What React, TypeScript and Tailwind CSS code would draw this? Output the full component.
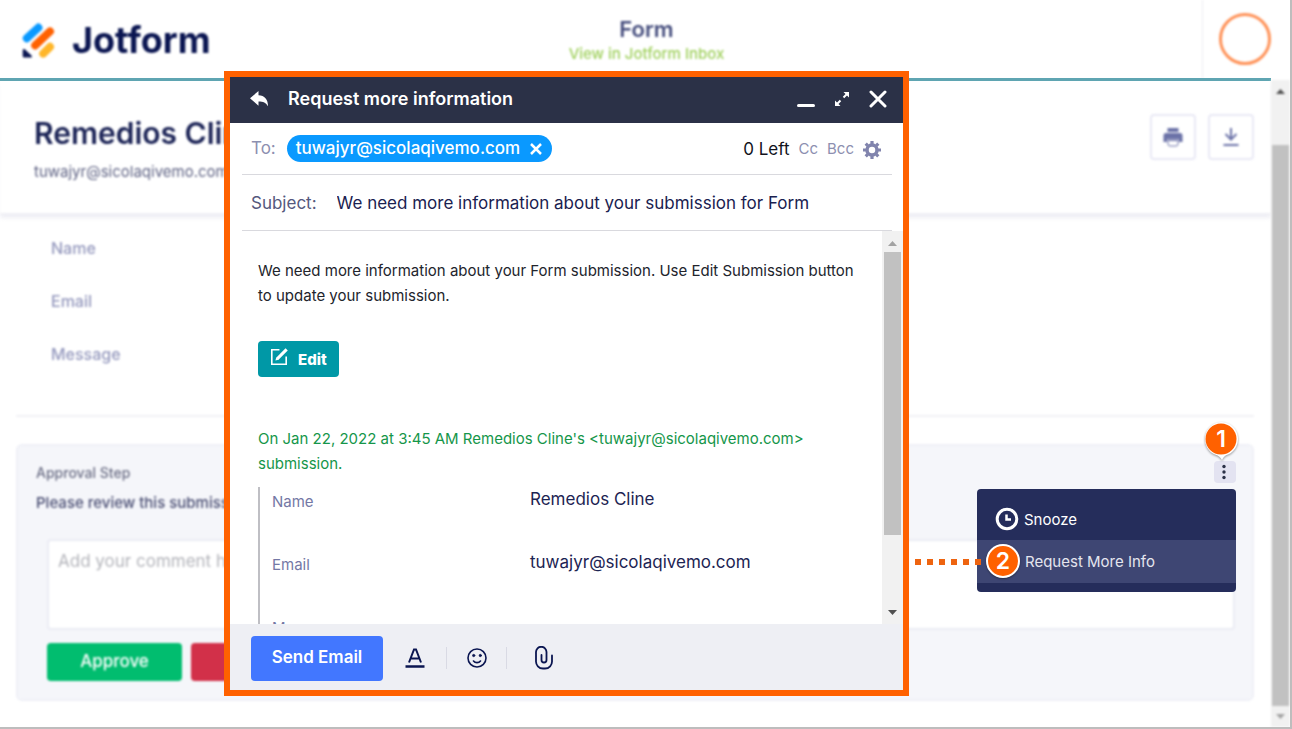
import React from "react";

const fields = ["Name", "Email", "Message"];

const submission = [
  { label: "Name", value: "Remedios Cline" },
  { label: "Email", value: "tuwajyr@sicolaqivemo.com" },
  { label: "Message", value: "" },
];

function Logo() {
  return (
    <svg viewBox="22 20 36 38" className="h-[38px] w-9" fill="none" strokeLinecap="round" aria-hidden="true">
      <path d="M26.8 37.2 38.4 26.6" stroke="#0a99ff" strokeWidth="8" />
      <path d="M35.2 44.4 50 30.4" stroke="#ff6100" strokeWidth="8" />
      <path d="M43.2 52.6 50 45.8" stroke="#ffb629" strokeWidth="8" />
      <path d="M22.7 49.4c0-1.3 1.4-1.9 2.3-1l6.500 6c.9.9.3 2.100-.9 2.100h-6.400c-.8 0-1.500-.6-1.500-1.500z" fill="#0a1551" />
    </svg>
  );
}

function Arrow({ down = false, className = "" }: { down?: boolean; className?: string }) {
  return (
    <svg viewBox="0 0 9 5" className={`h-[5px] w-[9px] ${className}`} fill="currentColor" aria-hidden="true">
      <path d={down ? "M0 0h9L4.500 5z" : "M0 5h9L4.500 0z"} />
    </svg>
  );
}

function PageHeader() {
  return (
    <header className="flex h-[78px] shrink-0 items-stretch blur-[0.8px]">
      <div className="flex flex-1 items-center gap-[14px] pt-[2px] pl-[22px]">
        <Logo />
        <span className="text-[36px] leading-10 font-bold text-[#0a1551]">Jotform</span>
      </div>
      <div className="flex flex-col items-center pt-[15px] pr-[19px]">
        <h1 className="text-[22px] leading-7 font-semibold text-[#454d7d]">Form</h1>
        <a href="#inbox" className="text-[15px] leading-[22px] font-medium text-[#9fd05c]">
          View in Jotform Inbox
        </a>
      </div>
      <div className="flex flex-1 justify-end">
        <div className="flex w-[88px] items-center border-l border-[#ececf2] pl-4">
          <button aria-label="Account" className="size-[52px] rounded-full border-[3px] border-[#ff9258]" />
        </div>
      </div>
    </header>
  );
}

function Summary() {
  return (
    <section className="flex h-[133px] items-start justify-between border-b border-[#eeeef4] pt-[33px] pr-[17px] pl-[34px] shadow-[0_4px_4px_#efeff5] blur-[0.8px]">
      <div>
        <h2 className="text-[30px] leading-[38px] font-semibold text-[#1b2356]">Remedios Cline</h2>
        <p className="mt-2 text-[15px] leading-6 text-[#5f6384]">tuwajyr@sicolaqivemo.com</p>
      </div>
      <div className="flex gap-3">
        <button aria-label="Print" className="flex size-[46px] items-center justify-center rounded border-2 border-[#e9e9f5]">
          <svg viewBox="0 0 20 20" className="size-5" fill="#6c73a8" aria-hidden="true">
            <path d="M4.500 1h11v4h-11zM3 6h14a2.500 2.500 0 0 1 2.500 2.500V15h-3.500v-2.500H4V15H.5V8.500A2.500 2.500 0 0 1 3 6z" />
            <path d="M5 13.500h10V17a2 2 0 0 1-2 2H7a2 2 0 0 1-2-2z" fill="#fff" stroke="#6c73a8" />
          </svg>
        </button>
        <button aria-label="Download" className="flex size-[46px] items-center justify-center rounded border-2 border-[#e9e9f5]">
          <svg viewBox="0 0 20 20" className="size-5" fill="none" stroke="#6c73a8" strokeWidth="2" aria-hidden="true">
            <path d="M10 1v11M4.500 7l5.500 5.500L15.500 7M2.500 18h15" />
          </svg>
        </button>
      </div>
    </section>
  );
}

function StepMenu() {
  return (
    <div className="absolute top-[17px] right-[18px] flex flex-col items-end">
      <button aria-label="More actions" className="flex size-[22px] items-center justify-center rounded bg-[#e3e3f1] pr-[2px]">
        <svg viewBox="0 0 4 16" className="h-4 w-1" fill="#2b3147" aria-hidden="true">
          <circle cx="2" cy="2.500" r="1.700" />
          <circle cx="2" cy="8" r="1.700" />
          <circle cx="2" cy="13.500" r="1.700" />
        </svg>
      </button>
      <div className="absolute right-[-3px] bottom-full flex h-10 w-9 justify-center">
        <svg viewBox="0 0 36 40" className="absolute inset-0 h-10 w-9 drop-shadow-[0_1px_1px_rgba(0,0,0,0.4)]" aria-hidden="true">
          <path d="M18 1a17 17 0 0 1 7 32.500c-3 1-4.500 2.500-6 5.500-1.500-3-4-4.500-7-5.500A17 17 0 0 1 18 1z" fill="#fff" />
          <circle cx="18" cy="18" r="15.500" fill="#ff6100" />
        </svg>
        <span className="relative text-[23px] leading-9 font-semibold text-white">1</span>
      </div>
      <ul className="mt-[6px] w-[259px] rounded bg-[#252d5b] pt-2 pb-[9px] text-[15px] text-white">
        <li>
          <button className="flex h-[43px] w-full items-center gap-[5px] pl-[18px]">
            <svg viewBox="0 0 24 24" className="size-6" fill="none" stroke="currentColor" strokeWidth="3" aria-hidden="true">
              <circle cx="12" cy="12" r="9.800" />
              <path d="M11.500 7.500v5h4.500" strokeWidth="2.500" />
            </svg>
            <span className="pt-[3px]">Snooze</span>
          </button>
        </li>
        <li className="relative">
          <button className="flex h-[43px] w-full items-center bg-[#3e4673] pt-[2px] pl-12 text-[#e4e5ee]">Request More Info</button>
          <div className="absolute top-[19px] -left-[62px] flex gap-[6px]" aria-hidden="true">
            {[0, 1, 2, 3, 4, 5].map((n) => (
              <i key={n} className="size-[6px] bg-[#ee6410]" />
            ))}
          </div>
          <span className="absolute top-1 left-[9px] flex size-[34px] items-center justify-center rounded-full border-2 border-white bg-[#ff6100] text-[23px] leading-none font-semibold text-white shadow-[0_1px_2px_rgba(0,0,0,0.4)]">
            2
          </span>
        </li>
      </ul>
    </div>
  );
}

function ApprovalStep() {
  return (
    <section className="relative mr-[17px] ml-4">
      <div className="rounded-md border-2 border-[#eff0f7] bg-[#f5f6fa] pt-[17px] pr-[17px] pb-[18px] pl-[29px] blur-[0.8px]">
        <div className="-ml-[11px]">
          <h3 className="text-[14px] leading-5 font-medium text-[#6c6f86]">Approval Step</h3>
          <p className="mt-2 text-[15px] leading-6 font-medium text-[#4a4e73]">Please review this submission.</p>
        </div>
        <textarea
          aria-label="Comment"
          placeholder="Add your comment here"
          className="mt-6 block h-[91px] w-full resize-none rounded border-2 border-[#ebecf4] bg-white px-[9px] py-2 text-[17px] leading-6 placeholder:text-[#b4b5bb]"
        />
        <div className="mt-[13px] flex gap-[9px]">
          <button className="h-[38px] w-[135px] rounded bg-[#01bd6f] text-[17px] font-medium text-white">Approve</button>
          <button aria-label="Deny" className="h-[38px] w-[135px] rounded bg-[#d23049]" />
        </div>
      </div>
      <StepMenu />
    </section>
  );
}

function Composer() {
  return (
    <div
      role="dialog"
      aria-label="Request more information"
      className="absolute top-[71px] left-[224px] w-[685px] border-[6px] border-[#ff6100] bg-white"
    >
      <div className="flex h-[46px] items-center bg-[#2b3147] pr-4 pb-[2px] pl-5 text-white">
        <button aria-label="Reply">
          <svg viewBox="0 0 20 18" className="h-[18px] w-5" fill="currentColor" aria-hidden="true">
            <path d="M0 8.300 8.500 1v4.300c6 .3 9.500 3.700 9.500 11-1.900-3.600-4.800-4.900-9.500-4.900v4.300z" />
          </svg>
        </button>
        <h2 className="ml-[18px] flex-1 text-[18px] leading-6 font-semibold">Request more information</h2>
        <div className="flex items-center gap-[18px]">
          <button aria-label="Minimize" className="flex h-5 items-end pb-[2px]">
            <span className="h-[3px] w-[18px] rounded-full bg-white" />
          </button>
          <button aria-label="Expand">
            <svg viewBox="0 0 18 18" className="size-[18px]" fill="currentColor" stroke="currentColor" aria-hidden="true">
              <path d="M10.500 2H16v5.500zM2 10.500V16h5.500z" stroke="none" />
              <path d="m10.500 7.500 4-4M7.500 10.500l-4 4" strokeWidth="2" />
            </svg>
          </button>
          <button aria-label="Close">
            <svg viewBox="0 0 18 18" className="size-[18px]" stroke="currentColor" strokeWidth="3" strokeLinecap="round" aria-hidden="true">
              <path d="m2 2 14 14M16 2 2 16" />
            </svg>
          </button>
        </div>
      </div>

      <div className="mr-[11px] ml-3">
        <div className="flex h-[52px] items-center border-b border-[#d9d9de] pr-[11px] pl-[9px]">
          <span className="text-[17px] text-[#8d8fb0]">To:</span>
          <span className="ml-[11px] flex h-[27px] items-center gap-[10px] rounded-full bg-[#0a99ff] pr-[10px] pl-[9px] text-[17px] font-medium text-white">
            tuwajyr@sicolaqivemo.com
            <button aria-label="Remove recipient">
              <svg viewBox="0 0 12 12" className="size-3" stroke="currentColor" strokeWidth="2.500" aria-hidden="true">
                <path d="m1 1 10 10M11 1 1 11" />
              </svg>
            </button>
          </span>
          <div className="ml-auto flex items-center gap-[9px] pt-[2px] text-[15px] text-[#8d8fb0]">
            <span className="text-[17px] text-[#12131c]">0 Left</span>
            <button>Cc</button>
            <button>Bcc</button>
            <button aria-label="Settings">
              <svg viewBox="-9 -9 18 18" className="size-[18px]" stroke="#8184ad" aria-hidden="true">
                <circle r="5" fill="none" strokeWidth="3.500" />
                <g strokeWidth="3.200">
                  <path d="M0-9v3M0 6v3M-9 0h3M6 0h3" />
                  <path d="m-6.300-6.300 2 2M6.300 6.300l-2-2M-6.300 6.300l2-2M6.300-6.300l-2 2" />
                </g>
              </svg>
            </button>
          </div>
        </div>
        <div className="flex h-14 items-center border-b border-[#d9d9de] pt-[2px] pl-[9px] text-[17px]">
          <label htmlFor="subject" className="text-[#54587d]">
            Subject:
          </label>
          <input
            id="subject"
            defaultValue="We need more information about your submission for Form"
            className="ml-5 min-w-0 flex-1 bg-transparent text-[#1a2150] outline-none"
          />
        </div>
      </div>

      <div className="flex h-[393px]">
        <div className="min-w-0 flex-1 overflow-hidden pt-[27px] pl-7 text-[15px] leading-[25px]">
          <p className="pr-6 text-[#22242c]">
            We need more information about your Form submission. Use Edit Submission button to update your submission.
          </p>
          <button className="mt-[33px] flex h-9 items-center gap-[10px] rounded bg-[#0098a6] px-3 text-[15px] font-extrabold text-white">
            <svg viewBox="0 0 20 20" className="-mt-1 size-[18px]" fill="none" stroke="currentColor" strokeWidth="1.800" aria-hidden="true">
              <path d="M10.500 2H2v16h16V9.500" />
              <path d="m8 12 10.500-10.500" strokeWidth="3.400" />
              <path d="m6 14 1-3.500 2.500 2.500z" fill="currentColor" stroke="none" />
            </svg>
            Edit
          </button>
          <p className="mt-[49px] pr-12 text-[#15964a]">
            On Jan 22, 2022 at 3:45 AM Remedios Cline's &lt;tuwajyr@sicolaqivemo.com&gt; submission.
          </p>
          <div className="mt-[11px] border-l-2 border-[#bfbfc4]">
            <table className="w-full table-fixed text-left">
              <tbody>
                {submission.map((row) => (
                  <tr key={row.label} className="h-[63px] align-top">
                    <th scope="row" className="w-[270px] pt-[2px] pl-3 font-normal text-[#7478a5]">
                      {row.label}
                    </th>
                    <td className="text-[17px] text-[#1d2453]">{row.value}</td>
                  </tr>
                ))}
              </tbody>
            </table>
          </div>
        </div>
        <div className="flex w-[21px] flex-col items-center bg-[#f1f1f1] pt-[10px] pb-[9px]" aria-hidden="true">
          <Arrow className="text-[#a3a3a3]" />
          <div className="mt-[6px] h-[283px] w-[17px] bg-[#c1c1c1]" />
          <Arrow down className="mt-auto text-[#505050]" />
        </div>
      </div>

      <div className="flex h-[66px] items-center bg-[#eeeff4] pt-[2px] pl-[21px] text-[#0a1551]">
        <button className="h-[45px] w-[132px] rounded bg-[#4277ff] text-[17px] font-semibold text-white">Send Email</button>
        <button aria-label="Text color" className="ml-[22px]">
          <svg viewBox="0 0 20 22" className="h-[22px] w-5" fill="none" stroke="currentColor" aria-hidden="true">
            <path d="M4 15.500 9 2.500h2l5 13M5.800 11.500h8.400" strokeWidth="2" />
            <path d="M.5 19.500h19" strokeWidth="2.500" />
          </svg>
        </button>
        <i className="ml-[21px] h-[22px] w-px bg-[#d9dae4]" />
        <button aria-label="Insert emoji" className="ml-5">
          <svg viewBox="0 0 20 20" className="size-5" fill="none" stroke="currentColor" strokeWidth="1.600" strokeLinecap="round" aria-hidden="true">
            <circle cx="10" cy="10" r="9" />
            <path d="M6.500 13c1.700 2.200 5.300 2.200 7 0" />
            <circle cx="6.700" cy="7.500" r="1.200" fill="currentColor" strokeWidth=".6" />
            <circle cx="13.300" cy="7.500" r="1.200" fill="currentColor" strokeWidth=".6" />
          </svg>
        </button>
        <i className="ml-[19px] h-[22px] w-px bg-[#d9dae4]" />
        <button aria-label="Attach file" className="ml-[27px]">
          <svg viewBox="0 0 20 24" className="h-6 w-5" fill="none" stroke="currentColor" strokeWidth="1.800" strokeLinecap="round" aria-hidden="true">
            <path d="M7.500 9v5a2.500 2.500 0 0 0 5 0V6a5 5 0 0 0-10.500 0v9a7 7 0 0 0 7 7.500h2a7 7 0 0 0 7-7.500V9.500" />
          </svg>
        </button>
      </div>
    </div>
  );
}

export default function App() {
  return (
    <div className="relative flex h-screen min-h-[729px] flex-col overflow-hidden border-r-2 border-b-2 border-[#bdbdbd] bg-white font-['Inter',sans-serif]">
      <PageHeader />
      <div className="flex min-h-0 flex-1">
        <main className="min-w-0 flex-1">
          <div className="h-[3px] bg-[#5fa5b2] blur-[0.5px]" />
          <Summary />
          <dl className="mr-[17px] ml-4 flex h-[203px] flex-col gap-[29px] border-b-2 border-[#f1f1f6] pt-[22px] pl-[35px] text-[16px] leading-6 font-medium text-[#9498bd] blur-[0.8px]">
            {fields.map((name) => (
              <dt key={name}>{name}</dt>
            ))}
          </dl>
          <div className="pt-[27px]">
            <ApprovalStep />
          </div>
        </main>
        <div className="mt-[2px] flex w-[19px] flex-col items-center bg-[#f1f1f1] pt-[9px] pb-2 blur-[0.8px]" aria-hidden="true">
          <Arrow className="text-[#505050]" />
          <div className="mt-[51px] mb-2 w-[17px] flex-1 bg-[#c1c1c1]" />
          <Arrow down className="text-[#a3a3a3]" />
        </div>
      </div>
      <Composer />
    </div>
  );
}
